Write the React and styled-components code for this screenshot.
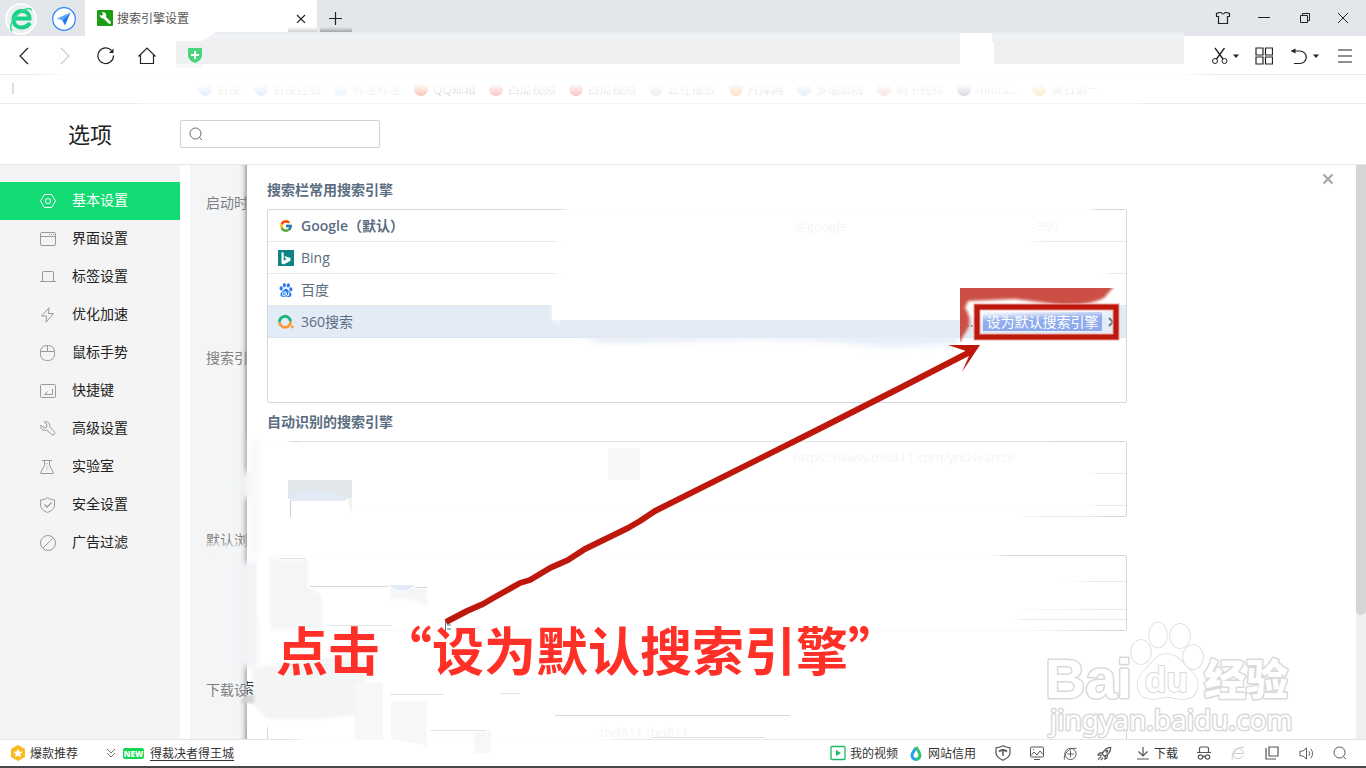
import React from 'react';
import styled, { createGlobalStyle, css } from 'styled-components';
import { FcGoogle } from 'react-icons/fc';
import { SiBaidu } from 'react-icons/si';

const GlobalStyle = createGlobalStyle`
    * {
        box-sizing: border-box;
    }
    body {
        margin: 0;
        background: #fff;
        color: #222;
        font-family: "Open Sans", "Noto Sans CJK SC", sans-serif;
        font-size: 14px;
    }
    button, input {
        font: inherit;
        color: inherit;
        padding: 0;
        border: 0;
        background: none;
    }
    h1, h2, ul {
        margin: 0;
        padding: 0;
        list-style: none;
    }
    svg {
        display: block;
        flex: none;
    }
`

const Window = styled.div`
    position: relative;
    display: flex;
    flex-direction: column;
    height: 100vh;
    overflow: hidden;
`

/* title bar */

const TitleBar = styled.header`
    display: flex;
    flex: none;
    height: 36px;
    background: #e3e6eb;
`
const Brand = styled.div`
    display: flex;
    align-items: center;
    gap: 15px;
    width: 85px;
    padding: 2px 0 0 5px;
`
const Tab = styled.div`
    display: flex;
    align-items: center;
    gap: 4px;
    width: 232px;
    padding: 0 10px 0 12px;
    background: #fff;
    color: #555;
    font-size: 12px;
`
const TabTitle = styled.span`
    flex: 1;
`
const IconButton = styled.button`
    display: flex;
    align-items: center;
    justify-content: center;
    gap: 4px;
    width: ${({ $w }) => $w || 34}px;
    height: 100%;
    color: ${({ $color }) => $color || '#222'};
`
const WindowButtons = styled.div`
    display: flex;
    margin-left: auto;
    padding-right: 5px;
`

/* tool bar */

const ToolBar = styled.div`
    display: flex;
    flex: none;
    height: 38px;
    padding-left: 3px;
`
const NavButtons = styled.nav`
    display: flex;
    height: 100%;
    margin-right: 9px;
    padding-top: 2px;
`
const AddressBar = styled.label`
    display: flex;
    flex: 784;
    align-items: center;
    gap: 8px;
    height: 23px;
    margin: 5px 32px 0 0;
    padding: 5px 0 0 12px;
    border-radius: 3px 0 0 0;
    background: #eef0f2;
`
const QuickSearch = styled.input`
    flex: 192;
    min-width: 0;
    height: 23px;
    margin-top: 5px;
    background: #eef0f2;
`
const BareInput = styled.input`
    flex: 1;
    min-width: 0;
    outline: 0;
`
const ToolButtons = styled.div`
    display: flex;
    height: 100%;
    padding: 2px 0 0 22px;
`

const Bookmarks = styled.nav`
    display: flex;
    flex: none;
    align-items: center;
    gap: 12px;
    height: 30px;
    padding-left: 197px;
    border-top: 1px solid #ececec;
    border-bottom: 1px solid #ebebeb;
    font-size: 12px;
`
const Bookmark = styled.a`
    display: flex;
    align-items: center;
    gap: 4px;
    color: #999;
    text-decoration: none;
    white-space: nowrap;
    opacity: ${({ $strength }) => $strength};
    mask-image: linear-gradient(transparent 20%, #000 90%);
`
const Favicon = styled.i`
    width: 14px;
    height: 14px;
    margin: 1px;
    border-radius: 7px;
    background: ${({ $color }) => $color};
`

/* options page */

const PageHeader = styled.div`
    display: flex;
    flex: none;
    align-items: center;
    gap: 68px;
    height: 61px;
    padding-left: 68px;
    border-bottom: 1px solid #e6e6e6;
`
const PageTitle = styled.h1`
    font-size: 22px;
    font-weight: 400;
    line-height: 30px;
`
const SearchBox = styled.label`
    display: flex;
    align-items: center;
    gap: 8px;
    width: 200px;
    height: 28px;
    padding: 0 8px;
    border: 1px solid #d0d0d0;
    border-radius: 2px;
    color: #666;
`
const Body = styled.div`
    display: flex;
    flex: 1;
    min-height: 0;
`
const Sidebar = styled.nav`
    flex: none;
    width: 180px;
    padding-top: 17px;
    background: #f4f4f4;
`
const SideLink = styled.a`
    display: flex;
    align-items: center;
    gap: 16px;
    height: 38px;
    padding-left: 40px;
    color: #222;
    line-height: 20px;
    text-decoration: none;
    svg {
        color: #999;
    }
    ${({ $active }) => $active && css`
        background: #13db73;
        color: #fff;
        svg {
            color: #fff;
        }
    `}
`
const SideText = styled.span`
    padding-bottom: 2px;
`
const Underlay = styled.section`
    flex: none;
    width: 57px;
    margin-left: 10px;
    padding: 27px 0 0 16px;
    overflow: hidden;
    background: linear-gradient(90deg, transparent 49px, #e4e5e7 53px, #a6a7a9 57px), #f3f5f7;
`
const UnderlayRow = styled.div`
    height: ${({ $h }) => $h}px;
    color: #808080;
    line-height: 22px;
    white-space: nowrap;
`
const Dialog = styled.section`
    flex: 1;
    min-width: 0;
    padding: 14px 229px 0 20px;
    overflow: hidden;
    position: relative;
`
const DialogClose = styled.button`
    position: absolute;
    top: 7px;
    right: 21px;
    color: #aaa;
`
const GroupTitle = styled.h2`
    margin-bottom: 8px;
    color: #5a6d81;
    font-size: 14px;
    font-weight: 600;
    line-height: 22px;
`
const EngineList = styled.ul`
    height: ${({ $h }) => $h}px;
    margin-bottom: ${({ $gap }) => $gap}px;
    border: 1px solid #d6d6d6;
    border-radius: 2px;
`
const Engine = styled.li`
    display: flex;
    align-items: center;
    gap: 7px;
    height: ${({ $h }) => $h || 32}px;
    padding-left: 10px;
    border-bottom: 1px solid #e8e8e8;
    color: #5a6d81;
    line-height: 20px;
    ${({ $bold }) => $bold && 'font-weight: 600;'}
    ${({ $selected }) => $selected && 'background: #e3ebf6; border-color: #dbe3ee;'}
`
const EngineIcon = styled.span`
    display: flex;
    align-items: center;
    justify-content: center;
    width: 16px;
    height: 16px;
`
const EngineActions = styled.span`
    display: flex;
    align-items: center;
    gap: 6px;
    margin-left: auto;
    padding-right: 8px;
    color: #777;
`
const DefaultButton = styled.button`
    width: 119px;
    height: 19px;
    background: #8eabed;
    color: #fff;
    font-size: 14px;
    line-height: 18px;
    white-space: nowrap;
`
const Scrollbar = styled.div`
    flex: none;
    width: 10px;
    background: #f0f0f0;
`
const ScrollThumb = styled.div`
    height: 450px;
    border-radius: 0 0 5px 5px;
    background: #d5d5d5;
`

/* status bar */

const StatusBar = styled.footer`
    display: flex;
    flex: none;
    align-items: center;
    height: 29px;
    padding: 0 9px 0 10px;
    border-top: 1px solid #e4e4e4;
    border-bottom: 2px solid #48484a;
    color: #333;
    font-size: 12px;
`
const StatusButton = styled.button`
    display: flex;
    align-items: center;
    gap: 4px;
    margin-right: ${({ $gap }) => $gap || 0}px;
    padding-left: ${({ $pad }) => $pad || 0}px;
    white-space: nowrap;
`
const NewBadge = styled.span`
    width: 21px;
    margin: 0 6px 0 7px;
    border-radius: 2px;
    background: #13d852;
    color: #fff;
    font-size: 8px;
    font-weight: 800;
    line-height: 11px;
    text-align: center;
`
const NewsLink = styled.a`
    color: #333;
    text-underline-offset: 2px;
`
const StatusRight = styled.div`
    display: flex;
    align-items: center;
    height: 100%;
    margin-left: auto;
`

/* drawings over the page */

const Overlay = styled.svg`
    position: absolute;
    inset: 0;
    width: 100%;
    height: 100%;
    pointer-events: none;
`
const Headline = styled.p`
    position: absolute;
    top: 613px;
    left: 276px;
    margin: 0;
    color: #ff3027;
    font-family: "Noto Sans CJK SC", sans-serif;
    font-size: 52px;
    font-weight: 700;
    line-height: 72px;
    white-space: nowrap;
`

const Icon = ({ size = 16, box = 16, sw = 1, color = 'currentColor', children }) => (
    <svg width={size} height={size} viewBox={`0 0 ${box} ${box}`} fill="none" stroke={color} strokeWidth={sw} aria-hidden="true">
        {children}
    </svg>
)

const Caret = () => (
    <Icon size={6} box={6}><path d="M0 1.500h6L3 5z" fill="#222" stroke="none" /></Icon>
)

const SearchGlyph = ({ size = 14 }) => (
    <Icon size={size} box={14}><circle cx="6.500" cy="6.500" r="5.500" /><path d="M10.500 10.500l2.500 2.500" /></Icon>
)

const menu = [
    { text: '基本设置', icon: <><path d="M4.500 1.500h7L15.500 8l-4 6.500h-7L.5 8z" /><circle cx="8" cy="8" r="2.600" /></> },
    { text: '界面设置', icon: <><rect x=".5" y="1.500" width="15" height="13" rx="1.500" /><path d="M.5 5.500h15M9 3.500h1M11 3.500h1M13 3.500h1" /></> },
    { text: '标签设置', icon: <path d="M0 12.500h16M2.500 12.500v-9a1 1 0 0 1 1-1h9a1 1 0 0 1 1 1v9" /> },
    { text: '优化加速', icon: <path d="M9 .8L1.500 9H6.500L6 15.200L13.500 6.500H8.500z" /> },
    { text: '鼠标手势', icon: <><rect x=".5" y=".5" width="14" height="15" rx="6" /><path d="M.5 6.500h14M7.500 .5v6" /></> },
    { text: '快捷键', icon: <><rect x=".5" y="1.500" width="15" height="13" rx="1" /><path d="M12.500 6v5.500h-8l3-3" /></> },
    { text: '高级设置', icon: <path d="M1 4l3 3 2.500-.8L7 3.500 4.200 1C7.500-.2 10.500 2 9.600 5.500l5 5.700c.8 2-1 3.500-2.900 2.300L6.500 9C3 10.500-.2 7.500 1 4z" /> },
    { text: '实验室', icon: <><path d="M2 1.500h10M4.500 1.500v5L.8 13v1.500h12.400V13L9.500 6.500v-5" /><path d="M7 4v8" strokeDasharray="1 1.500" /></> },
    { text: '安全设置', icon: <><path d="M7.500 .6C5 2.300 3 2.800 .6 3v5c0 3.500 3 6 6.900 7.500 4-1.500 7-4 7-7.500V3C12 2.800 10 2.300 7.500 .6z" /><path d="M4.500 7.500l2.500 2.600L11.500 5.500" strokeWidth="1.300" /></> },
    { text: '广告过滤', icon: <><circle cx="8" cy="8" r="7.500" /><path d="M3 13L13 3" /></> },
]

const bookmarks = [
    ['百度', '#7db2f5', 0.22],
    ['百度经验', '#7db2f5', 0.22],
    ['哔哩哔哩', '#89d2f1', 0.2],
    ['QQ邮箱', '#ee6f4d', 0.42],
    ['西瓜视频', '#f1586a', 0.36],
    ['西瓜视频', '#ef4444', 0.32],
    ['正在播放', '#bbbbbb', 0.26],
    ['片库网', '#f79d3c', 0.32],
    ['多瑙影院', '#84bbea', 0.24],
    ['蜗牛视频', '#f3848f', 0.22],
    ['mmr2…', '#4d5d73', 0.24],
    ['黄石第一', '#f8a92c', 0.24],
]

const BrowserLogo = () => (
    <svg width="32" height="32" viewBox="0 0 32 32" fill="none" aria-hidden="true">
        <circle cx="16" cy="16" r="15" fill="#eceff2" stroke="#fff" strokeWidth="1.500" />
        <path d="M8.500 15.500H24.500C24.500 10.500 21.300 8 17 8 12 8 8.500 11.500 8.500 16.500 8.500 21.500 12 24.500 16.500 24.500c3.500 0 6.300-1.500 8.500-4.500" stroke="#18d184" strokeWidth="4" />
        <path d="M7.500 28C3.500 26 6.500 16.500 14 10.500 19 6 25 3.500 27 7.500" stroke="#35dd98" strokeWidth="1.600" />
    </svg>
)

const PlaneLogo = () => (
    <svg width="24" height="24" viewBox="0 0 24 24" aria-hidden="true">
        <circle cx="12" cy="12" r="11.300" fill="#fff" stroke="#2f86f6" strokeWidth="1.200" />
        <path d="M18.500 5.500L5 11.500l5.300 1.700z" fill="#5ba5fb" />
        <path d="M18.500 5.500L13 18.500l-2.700-5.300z" fill="#1d79f2" />
    </svg>
)

const ThreeSixtyLogo = () => (
    <svg width="16" height="16" viewBox="0 0 16 16" fill="none" aria-hidden="true">
        <path d="M1.500 8.300A5.500 5.500 0 1 1 12.500 7.300" stroke="#19b777" strokeWidth="2.800" />
        <path d="M1.500 8.300A5.500 5.500 0 0 0 12.500 7.300" stroke="#f99a37" strokeWidth="2.800" />
        <circle cx="14.300" cy="13" r="1.400" fill="#f99a37" />
    </svg>
)

const BingLogo = () => (
    <svg width="16" height="16" viewBox="0 0 16 16" aria-hidden="true">
        <path d="M0 0h16v16H0z" fill="#0c8484" />
        <path d="M3.500 2l2.200 .8v7.900l3-1.700-1.500-.7-.9-2.300L12.500 8v2.700l-6.800 3.800-2.200-1.300z" fill="#fff" />
    </svg>
)

const Haze = () => (
    <Overlay aria-hidden="true">
        <defs>
            <filter id="soft" x="-20%" y="-50%" width="140%" height="200%"><feGaussianBlur stdDeviation="3" /></filter>
            <filter id="fine" x="-20%" y="-20%" width="140%" height="140%"><feGaussianBlur stdDeviation="1.500" /></filter>
            <filter id="wide" x="-20%" y="-50%" width="140%" height="200%"><feGaussianBlur stdDeviation="10 2" /></filter>
            <linearGradient id="tabEdge" x1="0" y1="0" x2="0" y2="1">
                <stop offset="0" stopColor="#555" stopOpacity="0" />
                <stop offset="1" stopColor="#555" stopOpacity=".45" />
            </linearGradient>
            <linearGradient id="fieldTop" x1="0" y1="0" x2="0" y2="1">
                <stop offset="0" stopColor="#e7eaee" />
                <stop offset=".4" stopColor="#f2f3f5" />
                <stop offset="1" stopColor="#eef0f2" />
            </linearGradient>
            <clipPath id="redArea"><path d="M960 288h160v54H960z" /></clipPath>
            <clipPath id="halfChar"><path d="M247 680h7v16h-7z" /></clipPath>
        </defs>

        {/* tab strip and address bar */}
        <path d="M288 27h29v5h-29z" fill="url(#tabEdge)" opacity=".6" />
        <path d="M320 27h32v5h-32z" fill="url(#tabEdge)" />
        <path d="M216 32H960V42H200z" fill="url(#fieldTop)" />
        <path d="M992 32h192v10H992z" fill="url(#fieldTop)" />
        <path d="M960 33h32v32h-32z" fill="#fff" />
        <path d="M176 64h26v4h-26z" fill="#f7f8f9" />
        <path d="M50 72H1195V79H50z" fill="#fff" filter="url(#wide)" />
        <path d="M140 103h1000v1H140z" fill="#fff" opacity=".4" />
        <path d="M12 83h2v11h-2z" fill="#ddd" />

        {/* engine table */}
        <path d="M565 203H1092L1098 232L1032 240V244L1108 268V312L960 318H556V244z" fill="#fff" filter="url(#soft)" />
        <path d="M552 298H960V320H552z" fill="#fff" />
        <path d="M552 300h14v20h-14z" fill="#fff" filter="url(#soft)" />
        <path d="M575 334H958V344L890 347L830 342L760 339L640 343H600z" fill="#e7eef8" filter="url(#soft)" />
        <path d="M560 320H960V337H560z" fill="#e3ebf6" />

        {/* lower tables */}
        <path d="M255 436H290V520L330 510H1015L1100 478L1115 478 1022 500 1022 515 1105 518 1105 524H260z" fill="#fff" filter="url(#soft)" />
        <path d="M300 441h750v1H300z" fill="#e2e2e2" />
        <path d="M263 466H1095V510H263z" fill="#fff" filter="url(#soft)" />
        <path d="M262 508H1018V524H262z" fill="#fff" />
        <path d="M250 550H985L1010 560 1090 584 1110 606 1020 612 1020 624 1108 634H250z" fill="#fff" filter="url(#soft)" />
        <path d="M250 662H1190V727H250z" fill="#fff" filter="url(#soft)" />
        <path d="M300 726H1110V737H300z" fill="#fff" filter="url(#soft)" />
        <path d="M300 735H614V743H300z" fill="#fff" filter="url(#soft)" />
        <g fill="#f5f5f5" fontSize="13">
            <text x="793" y="462">https://www.thd811.com/yndsearch/</text>
            <text x="600" y="737">thd811  thd811</text>
            <text x="795" y="231">@google</text>
            <text x="1032" y="231">-360</text>
        </g>

        {/* patches */}
        <g filter="url(#soft)">
            <path d="M240 472h14v26h-14zM238 562h20v105h-20z" fill="#f1f3f5" />
            <path d="M204 545h38v8h-38z" fill="#f3f5f7" />
            <path d="M249 440h12v115h-12z" fill="#f8f9fa" />
        </g>
        <g filter="url(#fine)">
            <path d="M270 557q12 5 38 3v27l14 8v34h-52z" fill="#f4f5f7" />
            <path d="M258 550h12v72h-12z" fill="#fff" />
            <path d="M252 668L330 657 365 662V712L344 716 320 719H268L252 704z" fill="#f3f4f4" />
            <path d="M390 588h37v18l-18-7h-19z" fill="#f4f6f8" />
        </g>
        <path d="M355 683h28v56h-28zM391 701l36 1v44l-36-8zM474 733l17-3v22l-17 2z" fill="#f7f7f7" />
        <path d="M608 448h32v32h-32z" fill="#f7f7f7" />
        <path d="M288 480h64v19h-64z" fill="#e3e7e9" />
        <path d="M291 501v-7q12-5 32-4 17 1 24 11z" fill="#e2eaf6" />
        <path d="M291 501h61v15h-61z" fill="#fff" />
        <path d="M347 498h5v18z" fill="#f1f3f5" />
        <path d="M290 500h1v17h-1z" fill="#ccc" />
        <path d="M388 585h27q-12 10-27 0z" fill="#e2eaf6" />
        <path d="M310 586h78v1h-78zM415 587h12v1h-12zM555 715h235v1H555z" fill="#d8d8d8" />
        <path d="M330 625h62v1h-62zM280 558h26v1h-26zM390 694h54v1h-54zM500 693h20v1h-20zM652 737h112v1H652zM430 730h56v1h-56z" fill="#e3e3e3" />
        <path d="M246 695h8v8h-14z" fill="#d3d3d4" filter="url(#fine)" />
        <text x="240" y="693" fontSize="14" fill="#333" clipPath="url(#halfChar)">索</text>

        {/* red marker */}
        <path d="M962 300h60v10h-60z" fill="#fff" filter="url(#fine)" />
        <g clipPath="url(#redArea)">
            <path d="M950 270H1128L1104 298Q1088 306 1062 305L1015 299 968 301 965 308Q975 322 963 336L956 350H945z" fill="#cb5044" filter="url(#fine)" />
        </g>
        <rect x="977" y="307" width="139" height="30" fill="none" stroke="#e9a39b" strokeWidth="7" />
        <rect x="977" y="307" width="139" height="30" fill="none" stroke="#bd180b" strokeWidth="5" />
        <path d="M446 622L467 611 483 604 495 597 520 583 530 580 550 568 568 560 585 549 628 528 640 521 655 511 817 430 900 388 968 353" fill="none" stroke="#bd180b" strokeWidth="6" strokeLinejoin="round" />
        <path d="M980 345L948 345 966 351 969 356 962 372z" fill="#bd180b" />
        <path d="M445.500 621v10M447 625h4M447 629h4" stroke="#5a6d81" fill="none" />
    </Overlay>
)

const Watermark = () => (
    <Overlay role="img" aria-label="Baidu 经验">
        <g fill="#fff" stroke="#d9d9d9" strokeWidth="3" strokeLinejoin="round" paintOrder="stroke">
            <text x="1045" y="698" fontFamily="Liberation Sans" fontWeight="700" fontSize="56">Bai</text>
            <g strokeWidth="1.500">
                <ellipse cx="1141" cy="652" rx="10" ry="12" />
                <ellipse cx="1158" cy="635" rx="9" ry="12.500" />
                <ellipse cx="1180" cy="636" rx="10" ry="12" />
                <ellipse cx="1193" cy="657" rx="10" ry="12" />
                <path d="M1166 654c-10 0-14 10-21 16-12 9-10 29 8 29 6 0 8-2 14-2s9 2 15 2c18 0 20-19 9-28-8-7-13-17-25-17z" />
            </g>
            <text x="1145" y="692" fontFamily="Liberation Sans" fontWeight="700" fontSize="35" strokeWidth="2">du</text>
            <text x="1204" y="695" fontFamily="Noto Sans CJK SC" fontWeight="900" fontSize="42">经验</text>
            <text x="1050" y="730" fontFamily="Noto Sans" fontSize="28">jingyan.baidu.com</text>
        </g>
    </Overlay>
)

const App = () => {
    return (
        <Window>
            <GlobalStyle />
            <TitleBar>
                <Brand>
                    <BrowserLogo />
                    <PlaneLogo />
                </Brand>
                <Tab>
                    <svg width="16" height="16" viewBox="0 0 16 16" aria-hidden="true">
                        <rect width="16" height="16" rx="1" fill="#1c9e12" />
                        <path d="M6 6l6.500 6.500" stroke="#fff" strokeWidth="2.800" strokeLinecap="round" />
                        <path d="M2.500 4.500l2.500 1.800L6.500 5 5 2.300C8 1.800 10 4 9 6.800 7.500 9.500 3 9 2.500 4.500z" fill="#fff" />
                    </svg>
                    <TabTitle>搜索引擎设置</TabTitle>
                    <IconButton $w={12} aria-label="关闭标签">
                        <Icon size={10} box={10} sw={1.1}><path d="M1 2l8 8M9 2L1 10" /></Icon>
                    </IconButton>
                </Tab>
                <IconButton $w={37} aria-label="新标签">
                    <Icon size={14} box={14} sw={1.2}><path d="M6.500 1v13M0 7.500h13" /></Icon>
                </IconButton>
                <WindowButtons>
                    <IconButton $w={41} aria-label="皮肤">
                        <Icon size={16} sw={1.2}><path d="M4.500 2.500H6Q8 5.500 10 2.500h1.500L14.500 3.500V6.500H12.500V13.500H3.500V6.500H1.500V3.500z" /></Icon>
                    </IconButton>
                    <IconButton $w={41} aria-label="最小化">
                        <Icon size={12} box={12}><path d="M0 5.500h12" /></Icon>
                    </IconButton>
                    <IconButton $w={41} aria-label="还原">
                        <Icon size={10} box={10}><path d="M.5 2.500h7v7h-7zM2.500 2.500v-2h7v7h-2" /></Icon>
                    </IconButton>
                    <IconButton $w={36} aria-label="关闭">
                        <Icon size={12} box={12}><path d="M1 1l10 10M11 1L1 11" /></Icon>
                    </IconButton>
                </WindowButtons>
            </TitleBar>

            <ToolBar>
                <NavButtons>
                    <IconButton $w={41} aria-label="后退">
                        <Icon size={18} box={18} sw={1.2}><path d="M13 1L5 9l8 8" /></Icon>
                    </IconButton>
                    <IconButton $w={41} $color="#ccc" aria-label="前进">
                        <Icon size={18} box={18} sw={1.2}><path d="M5 1l8 8-8 8" /></Icon>
                    </IconButton>
                    <IconButton $w={41} aria-label="刷新">
                        <Icon size={18} box={18} sw={1.2}><path d="M16.500 8.500A7.800 7.800 0 1 1 14.500 3.500" /><path d="M16.500 1.500v4.500h-4.500z" fill="#222" stroke="none" /></Icon>
                    </IconButton>
                    <IconButton $w={41} aria-label="主页">
                        <Icon size={18} box={18} sw={1.2}><path d="M.5 9.500L9 1l8.500 8.500M2.500 8v8.500h13V8" /></Icon>
                    </IconButton>
                </NavButtons>
                <AddressBar>
                    <svg width="14" height="16" viewBox="0 0 14 16" aria-hidden="true">
                        <path d="M0 1h14v8q-1 5-7 7-6-2-7-7z" fill="#4bd47c" />
                        <path d="M7 4v8M3 8h8" stroke="#fff" strokeWidth="2" />
                    </svg>
                    <BareInput aria-label="地址" />
                </AddressBar>
                <QuickSearch aria-label="搜索" />
                <ToolButtons>
                    <IconButton $w={38} aria-label="截图">
                        <Icon size={18} box={18}><circle cx="4" cy="14" r="2.500" /><circle cx="13.500" cy="14" r="2.500" /><path d="M4 1l8 11M13.500 1l-8 11" strokeWidth="1.300" /></Icon>
                        <Caret />
                    </IconButton>
                    <IconButton $w={40} aria-label="应用">
                        <Icon size={18} box={18} sw={1.2}><path d="M1 1h7v7H1zM10.500 1h7v7h-7zM1 10h7v7H1zM10.500 10h7v7h-7z" /></Icon>
                    </IconButton>
                    <IconButton $w={40} aria-label="恢复">
                        <Icon size={20} box={20} sw={1.2}><path d="M5 5h6a6 6 0 0 1 0 12.500H5" /><path d="M1.500 5L6.500 2.500v5z" fill="#222" stroke="none" /></Icon>
                        <Caret />
                    </IconButton>
                    <IconButton $w={42} aria-label="菜单">
                        <Icon size={14} box={14} sw={1.2}><path d="M0 1h14M0 7h14M0 13h14" /></Icon>
                    </IconButton>
                </ToolButtons>
            </ToolBar>

            <Bookmarks>
                {bookmarks.map(([text, color, strength], i) => (
                    <Bookmark key={i} href="#" $strength={strength}>
                        <Favicon $color={color} />
                        {text}
                    </Bookmark>
                ))}
            </Bookmarks>

            <PageHeader>
                <PageTitle>选项</PageTitle>
                <SearchBox>
                    <SearchGlyph />
                    <BareInput aria-label="搜索选项" />
                </SearchBox>
            </PageHeader>

            <Body>
                <Sidebar>
                    {menu.map((item, i) => (
                        <SideLink key={item.text} href="#" $active={i === 0}>
                            <Icon>{item.icon}</Icon>
                            <SideText>{item.text}</SideText>
                        </SideLink>
                    ))}
                </Sidebar>
                <Underlay>
                    <UnderlayRow $h={155}>启动时打开</UnderlayRow>
                    <UnderlayRow $h={182}>搜索引擎</UnderlayRow>
                    <UnderlayRow $h={150}>默认浏览器</UnderlayRow>
                    <UnderlayRow $h={60}>下载设置</UnderlayRow>
                </Underlay>
                <Dialog>
                    <DialogClose aria-label="关闭">
                        <Icon size={14} box={14} sw={2.4}><path d="M2.500 2.500l9 9M11.500 2.500l-9 9" /></Icon>
                    </DialogClose>
                    <GroupTitle>搜索栏常用搜索引擎</GroupTitle>
                    <EngineList $h={194} $gap={8}>
                        <Engine $bold>
                            <EngineIcon><FcGoogle size={14} /></EngineIcon>
                            Google（默认）
                        </Engine>
                        <Engine>
                            <EngineIcon><BingLogo /></EngineIcon>
                            Bing
                        </Engine>
                        <Engine>
                            <EngineIcon><SiBaidu size={14} color="#2878f0" /></EngineIcon>
                            百度
                        </Engine>
                        <Engine $selected>
                            <EngineIcon><ThreeSixtyLogo /></EngineIcon>
                            360搜索
                            <EngineActions>
                                ...
                                <DefaultButton>设为默认搜索引擎</DefaultButton>
                                <Icon size={10} box={10} sw={2}><path d="M1 1l8 8M9 1L1 9" /></Icon>
                            </EngineActions>
                        </Engine>
                    </EngineList>
                    <GroupTitle>自动识别的搜索引擎</GroupTitle>
                    <EngineList $h={76} $gap={38}>
                        <Engine />
                        <Engine />
                    </EngineList>
                    <EngineList $h={76} $gap={84}>
                        <Engine $h={26} />
                        <Engine $h={28} />
                        <Engine $h={10} />
                    </EngineList>
                    <EngineList $h={76} $gap={0} />
                </Dialog>
                <Scrollbar>
                    <ScrollThumb />
                </Scrollbar>
            </Body>

            <StatusBar>
                <StatusButton $gap={28}>
                    <svg width="16" height="16" viewBox="0 0 16 16" aria-hidden="true">
                        <path d="M8 0l7 4v8l-7 4-7-4V4z" fill="#fbb81f" />
                        <path d="M8 3.500l1.400 2.900 3.100.4-2.200 2.200.5 3.200L8 10.700l-2.800 1.500.5-3.200-2.200-2.200 3.100-.4z" fill="#fff" />
                    </svg>
                    爆款推荐
                </StatusButton>
                <Icon size={10} box={10} color="#777"><path d="M1 1l4 4 4-4M1 5l4 4 4-4" /></Icon>
                <NewBadge>NEW</NewBadge>
                <NewsLink href="#">得裁决者得王城</NewsLink>
                <StatusRight>
                    <StatusButton $gap={10}>
                        <Icon color="#1cb863" sw={1.3}><rect x="1" y="1.500" width="14" height="13" rx="1" /><path d="M6 5l5 3-5 3z" fill="#1cb863" stroke="none" /></Icon>
                        我的视频
                    </StatusButton>
                    <StatusButton $gap={10}>
                        <svg width="16" height="16" viewBox="0 0 16 16" aria-hidden="true">
                            <path d="M8 3C6 6 4 8 4 10.500a4.200 4.200 0 0 0 4 4" stroke="#2a9df4" strokeWidth="3" fill="none" />
                            <path d="M8 2c2 3.500 4 6 4 8.500a4.200 4.200 0 0 1-4 4" stroke="#2dc66b" strokeWidth="3" fill="none" />
                        </svg>
                        网站信用
                    </StatusButton>
                    <IconButton $color="#555" aria-label="安全">
                        <Icon sw={1.2}><path d="M8 .8C6 2 4 2.500 1 2.800V8c0 3 3 5.500 7 7.300 4-1.800 7-4.300 7-7.300V2.800C12 2.500 10 2 8 .8z" /><path d="M4 6.500q4-3 8 0" strokeWidth="2" /><path d="M8 5v6" strokeWidth="1.500" /></Icon>
                    </IconButton>
                    <IconButton $color="#555" aria-label="图片">
                        <Icon size={14} box={14}><rect x=".5" y="1" width="13" height="10" rx="1" /><path d="M1 9.500l3-3.500 3 3 3-4 3 3.500M4 13.500h6M3 3.500h1" /></Icon>
                    </IconButton>
                    <IconButton $color="#555" aria-label="加速">
                        <Icon size={15}><circle cx="8" cy="8.500" r="6" /><path d="M8 5v7M4.500 8.500h7M1.500 14.500C0 9 7 1 14.500 2.500" /></Icon>
                    </IconButton>
                    <IconButton $color="#555" aria-label="清理">
                        <Icon size={15} sw={1.3}><path d="M14.500 1.500c-4 0-7 3-9 7l2.500 2.500c4-2 7-5 6.500-9.500zM6 7L2.500 7.500 1 9.500l4 .5M9 10.500l-.5 3.500 2-1 1-4.500M4.500 11L1 14.500M6.500 12.500L4 15" /><circle cx="10.500" cy="5.500" r="1" /></Icon>
                    </IconButton>
                    <StatusButton $gap={9} $pad={14}>
                        <Icon size={14} box={14} sw={1.2} color="#555"><path d="M7 1v9M2.500 5.500L7 10l4.500-4.500M1 13h12" /></Icon>
                        下载
                    </StatusButton>
                    <IconButton $color="#555" aria-label="无痕">
                        <Icon size={14} box={14} sw={1.2}><path d="M2.500 6V2.500a1.500 1.500 0 0 1 1.500-1.500h6a1.500 1.500 0 0 1 1.500 1.500V6M0 6.500h14M5.500 11q1.500-1.500 3 0" /><circle cx="3.500" cy="11" r="2.200" /><circle cx="10.500" cy="11" r="2.200" /></Icon>
                    </IconButton>
                    <IconButton $color="#ccc" aria-label="兼容模式">
                        <Icon size={14} box={14}><path d="M2 7.500h10.500c0-3.500-2.500-5-5-5S2 4.500 2 7.500s2 5 5 5c2.200 0 3.800-.8 4.800-2.500M1.500 13.500C-1 9 7-1 13 1.500" /></Icon>
                    </IconButton>
                    <IconButton $color="#555" aria-label="窗口">
                        <Icon size={14} box={14} sw={1.2}><path d="M4 1h9v9H4zM1 2v11h10" /></Icon>
                    </IconButton>
                    <IconButton $color="#555" aria-label="声音">
                        <Icon size={15}><path d="M1 5.500h3l4-3.500v12l-4-3.500H1zM10.500 5.500q2 2.500 0 5M12.500 3q4 5 0 10" /></Icon>
                    </IconButton>
                    <IconButton $color="#555" aria-label="缩放">
                        <SearchGlyph />
                    </IconButton>
                </StatusRight>
            </StatusBar>

            <Haze />
            <Watermark />
            <Headline>点击“设为默认搜索引擎”</Headline>
        </Window>
    );
};

export default App;
